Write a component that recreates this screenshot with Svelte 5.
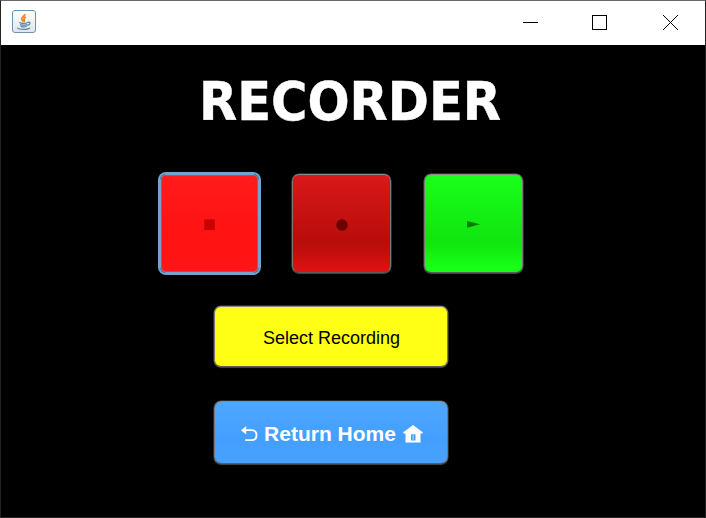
<script>
  let playing = $state(false);
</script>

<div class="window">
  <header>
    <svg class="java" width="24" height="24" viewBox="0 0 24 24">
      <defs>
        <linearGradient id="tile" x1="0" y1="0" x2="0" y2="1">
          <stop offset="0" stop-color="#ffffff" />
          <stop offset="1" stop-color="#dfe5ea" />
        </linearGradient>
      </defs>
      <rect x="0.5" y="0.5" width="23" height="22" rx="2.5" fill="url(#tile)" stroke="#6f93ad" />
      <path d="M12.800 4c.7 2-3.400 3-3 5 .1 1 1.300 1.700 1.500 2.700M14 7c-1.600.8-2.300 1.500-1.900 2.500.4.900.6 1.300-.1 2.400" fill="none" stroke="#ee8532" stroke-width="1.800" />
      <g fill="none" stroke="#5382a1" stroke-width="1.200">
        <path d="M7.300 12.500c2 .9 6.500.8 8.700 0M8 14.600c2 .7 5.500.6 7.400 0M8.700 16.500c1.800.6 4.300.5 6 0M15.800 12.300c3.300-.7 2.600 2.400-.2 3.100M6.200 17.800c-2.500 1.300 8.500 2.500 11.800.1" />
      </g>
    </svg>
    <div class="controls">
      <svg width="15" height="15" viewBox="0 0 15 15" shape-rendering="crispEdges"><path d="M0 7.500h15" /></svg>
      <svg width="15" height="15" viewBox="0 0 15 15" shape-rendering="crispEdges"><path d="M.5.5h14v14H.5z" /></svg>
      <svg width="15" height="15" viewBox="0 0 15 15"><path d="M0 0l15 15M15 0L0 15" /></svg>
    </div>
  </header>

  <main>
    <h1>RECORDER</h1>
    <div class="transport">
      <button class="stop focused" aria-label="Stop">
        <svg width="11" height="11" viewBox="0 0 11 11"><path d="M0 0h11v11H0z" fill="#e50808" /><path d="M.6.8h10v10H.6z" fill="#c80000" /></svg>
      </button>
      <button class="record" aria-label="Record">
        <svg width="12" height="12" viewBox="0 0 12 12"><circle cx="6" cy="6" r="5.700" fill="#6a0000" /></svg>
      </button>
      <button class="play" aria-label="Play" onclick={() => (playing = !playing)}>
        <svg width="13" height="7" viewBox="0 0 13 7"><path d="M0 0L13 3.300L0 6.800z" fill="#007d00" /></svg>
      </button>
    </div>
    <button class="select">Select Recording</button>
    <button class="home">
      <svg class="back" width="17" height="16" viewBox="0 0 17 16">
        <path d="M0 4.200L5.200 0V8.400z" fill="#fff" />
        <path d="M3 4.200h7.500c3.200 0 5 2.100 5 5s-1.800 5-5 5H4.200" fill="none" stroke="#fff" stroke-width="1.800" />
      </svg>
      <span>Return Home</span>
      <svg class="house" width="20" height="18" viewBox="0 0 20 18">
        <path d="M10 0L20 7.600l-.8 1H17.500V17.500H2.500V8.600H.8L0 7.600z" fill="#fff" />
        <path d="M8 9.300h4.500v6.200H8z" fill="#459fff" /><path d="M9.500 10h1.300v5H9.500z" fill="#8bd0ff" />
      </svg>
    </button>
  </main>
</div>

<style>
  :global(body) { margin: 0; background: #000; }
  .window {
    box-sizing: border-box;
    width: 706px;
    height: 518px;
    overflow: hidden;
    border: 1px solid #222;
    border-top-color: #6c6868;
    background: #000;
  }
  header {
    display: flex;
    justify-content: space-between;
    align-items: flex-start;
    height: 44px;
    background: #fff;
    box-sizing: border-box;
    padding: 9px 26px 0 11px;
  }
  .controls { display: flex; gap: 54px; padding-top: 5px; padding-right: 1px; }
  .controls svg { fill: none; stroke: #000; stroke-width: 1; }
  .controls svg:nth-child(2) { margin-right: 2px; }
  main { display: flex; flex-direction: column; }
  h1 {
    margin: 25px 0 0 198px;
    height: 64px;
    font: bold 53.5px/64px "DejaVu Sans Condensed", "DejaVu Sans", sans-serif;
    font-stretch: condensed;
    color: #fff;
    -webkit-text-stroke: 0.400px #fff;
    white-space: nowrap;
    transform: scaleX(1.030);
    transform-origin: 0 50%;
  }
  .transport { display: flex; gap: 33px; margin: 40px 0 0 158.500px; }
  button {
    box-sizing: border-box;
    padding: 0;
    display: flex;
    align-items: center;
    justify-content: center;
    border: 1px solid;
    border-color: #8b8b8b #777 #5c5c5c #777;
    border-radius: 7px;
    box-shadow: 0 0 0 0.500px #555, 0 1px 1px #333;
    font-family: "Liberation Sans", Arial, sans-serif;
  }
  .transport button { width: 99px; height: 99px; padding-top: 2px; }
  .stop { background: linear-gradient(#ff1c1c, #ff1212 60%, #ff1616); }
  .transport .focused {
    padding-left: 1px;
    border-color: #73a4d1;
    box-shadow: 0 0 0 2px #73a4d1, inset 0 0 0 1px #a05a58;
    border-radius: 6px;
  }
  .transport .record { padding-left: 1px; background: linear-gradient(#d81919, #b90c0c 68%, #bd0d0d 75%, #df1212); }
  .play { background: linear-gradient(#1aff1a, #10e610 65%, #10e810 73%, #18ff18 94%); }
  .select {
    width: 234px;
    height: 61px;
    margin: 33px 0 0 213px;
    padding: 3px 0 0 1px;
    background: #ffff16;
    font-size: 18px;
    color: #000;
  }
  .home {
    width: 234px;
    height: 63px;
    margin: 34px 0 0 213px;
    padding: 2px 0 0 2px;
    background: linear-gradient(#4fa6ff, #439fff 60%, #47a1ff);
    font-size: 21px;
    font-weight: bold;
    color: #fff;
    gap: 6px;
  }
  .home span { white-space: nowrap; }
  .home .house { margin-left: 1px; }
</style>
